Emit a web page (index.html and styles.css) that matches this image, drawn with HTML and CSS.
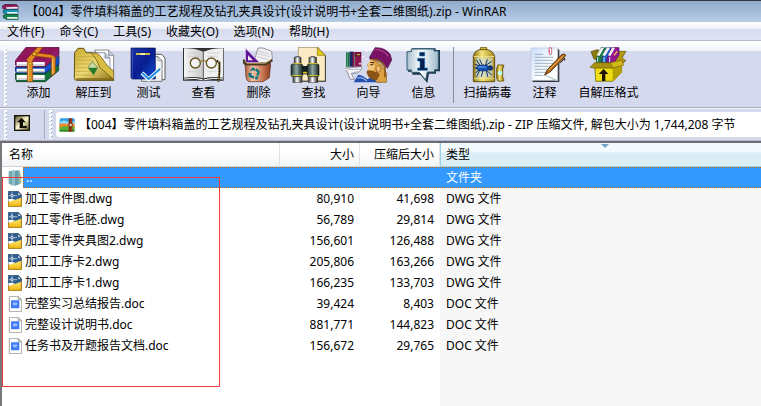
FILE: index.html
```html
<!DOCTYPE html>
<html lang="zh-CN">
<head>
    <meta charset="UTF-8">
    <meta name="viewport" content="width=device-width, initial-scale=1.0">
    <title>WinRAR</title>
    <link rel="stylesheet" href="styles.css">
</head>
<body>
    <!-- shared symbols and gradients -->
    <svg class="defs" aria-hidden="true">
        <defs>
            <linearGradient id="gold" x1="0" x2="1"><stop offset="0" stop-color="#8a7410"/><stop offset=".4" stop-color="#f4e37a"/><stop offset="1" stop-color="#a88a18"/></linearGradient>
            <linearGradient id="folder" x1="0" y1="0" x2="1" y2="1"><stop offset="0" stop-color="#c9a92c"/><stop offset=".5" stop-color="#ecd978"/><stop offset="1" stop-color="#8b7111"/></linearGradient>
            <linearGradient id="bluebook" x1="0" x2="1" y2="1"><stop offset="0" stop-color="#1734a8"/><stop offset=".5" stop-color="#0a1c90"/><stop offset="1" stop-color="#0a4fd0"/></linearGradient>
            <linearGradient id="copper" x1="0" x2="1"><stop offset="0" stop-color="#a55a3c"/><stop offset=".3" stop-color="#f3c4a5"/><stop offset=".7" stop-color="#c87450"/><stop offset="1" stop-color="#8c3d22"/></linearGradient>
            <linearGradient id="tube" x1="0" x2="1"><stop offset="0" stop-color="#1c2c2c"/><stop offset=".45" stop-color="#8fa9a5"/><stop offset="1" stop-color="#152020"/></linearGradient>
            <linearGradient id="silver" x1="0" x2="1"><stop offset="0" stop-color="#333"/><stop offset=".45" stop-color="#fff"/><stop offset="1" stop-color="#222"/></linearGradient>
            <linearGradient id="bubble" x1="0" x2="1"><stop offset="0" stop-color="#a8bfce"/><stop offset=".45" stop-color="#fff"/><stop offset="1" stop-color="#9db9ca"/></linearGradient>
            <linearGradient id="page" x1="0" x2="1"><stop offset="0" stop-color="#f4f4f4"/><stop offset="1" stop-color="#c9c9c9"/></linearGradient>
            <linearGradient id="sheet" x1="0" y1="0" x2="1" y2="1"><stop offset="0" stop-color="#c9dcf8"/><stop offset=".6" stop-color="#fff"/></linearGradient>
            <linearGradient id="upkey" x1="0" y1="0" x2="1" y2="1"><stop offset="0" stop-color="#5b5530"/><stop offset=".5" stop-color="#fffbd0"/><stop offset="1" stop-color="#605a2e"/></linearGradient>
            <linearGradient id="yellow" x1="0" x2="0" y1="0" y2="1"><stop offset="0" stop-color="#ffe873"/><stop offset="1" stop-color="#f0b90f"/></linearGradient>
        </defs>
        <symbol id="dwg" viewBox="0 0 42 48">
            <path d="M1 1H31L41 12V46H1z" fill="#2f5f90" stroke="#24486c" stroke-width="2"/>
            <path d="M30 2V13H40z" fill="#fff" stroke="#24486c" stroke-width="2"/>
            <path d="M12 2V26M3 14H28" stroke="#dce8f4" stroke-width="2"/>
            <path d="M9 11H15V17H9z" fill="#2f5f90" stroke="#fff" stroke-width="2"/>
            <path d="M2 24Q20 26 40 42V46H2z" fill="#fff"/>
            <path d="M2 46V33L40 20V46z" fill="url(#yellow)"/>
            <path d="M2 24H22L2 32z" fill="#fff"/>
            <path d="M2 31V46H40V20" fill="none" stroke="#bd8412" stroke-width="3"/>
        </symbol>
        <symbol id="doc" viewBox="0 0 42 48">
            <path d="M4 1H31L41 11V47H4z" fill="#fff" stroke="#a7a7a7" stroke-width="3"/>
            <path d="M30 1V12H41z" fill="#c9c9c9" stroke="#a7a7a7" stroke-width="2"/>
            <rect x="9" y="13" width="25" height="24" rx="2" fill="#3f7cf4"/>
            <path d="M15 21L18 28L21 24L24 28L27 21z" fill="#8bb3ff" stroke="#b9d0ff" stroke-width="2"/>
        </symbol>
        <symbol id="parent" viewBox="0 0 42 48">
            <path d="M2 4L21 1V46L2 42z" fill="#7caebb"/>
            <path d="M10 3L30 1V45L12 47z" fill="#91c2cc"/>
            <path d="M21 4L35 1V43L21 47z" fill="#6ea3b0"/>
            <path d="M35 3L40 20V38L35 43z" fill="#a6bd86"/>
            <path d="M10 4V45M24 3V45" stroke="#5a91a0" stroke-width="2"/>
        </symbol>
        <symbol id="books" viewBox="45 141 141 108">
            <path d="M46 219L134 219L176 190V212L136 245H50Q42 232 46 219z" fill="#13713c" stroke="#11251b" stroke-width="2"/>
            <path d="M46 201H134L177 167V193L136 219H50Q42 210 46 201z" fill="#1750c8" stroke="#101b48" stroke-width="2"/>
            <path d="M46 182L78 142H177V164L136 200H50Q42 190 46 182z" fill="#951c68" stroke="#3d0930" stroke-width="2"/>
            <path d="M78 143H176L136 179H48z" fill="#8f1658"/>
            <path d="M50 186H134V198H50zM50 206H134V217H50zM50 225H134V240H50z" fill="#fff"/>
            <path d="M53 195H134M53 214H134M53 237H134" stroke="#a7a7b4" stroke-width="3"/>
            <path d="M78 180L113 142H128L98 180V245H82V181M104 158L153 164L166 171V218L154 228V174L97 167z" fill="#e58b22" stroke="#8c4208" stroke-width="2"/>
            <path d="M86 190V243M158 178V222" stroke="#ffc26b" stroke-width="3"/>
            <path d="M103 158L109 162L104 166L98 162zM87 188H93V194H87zM87 209H93V215H87zM87 231H93V237H87z" fill="#e9ef4d" stroke="#66370a"/>
        </symbol>
        <symbol id="stack" viewBox="0 0 51 48">
            <path d="M2 5L12 1H42L48 6V16L12 17L2 13z" fill="#8e1f5c" stroke="#3d0a28" stroke-width="2"/>
            <path d="M12 10L47 8V14L14 15z" fill="#f3e8ee"/>
            <path d="M4 19L14 16H46L48 20V31H14L4 27z" fill="#1796b4" stroke="#0b3c55" stroke-width="2"/>
            <path d="M15 24H47V29H16z" fill="#e9f7fb"/>
            <path d="M4 34L14 31H46L48 35V46H14L4 41z" fill="#14854f" stroke="#083a20" stroke-width="2"/>
            <path d="M15 39H47V44H16z" fill="#eaf6ee"/>
        </symbol>
        <symbol id="zip" viewBox="0 0 48 42">
            <path d="M3 4Q3 1 6 1H44Q47 1 47 5V14H1z" fill="#2b9fe8"/>
            <path d="M1 12Q14 4 24 10T47 9V28H1z" fill="#8ad6f5"/>
            <path d="M1 17H47V29H1z" fill="#f18a2a"/>
            <path d="M1 28Q20 22 47 28V39Q47 41 44 41H4Q1 41 1 38z" fill="#58ae36"/>
            <path d="M2 38H46" stroke="#32832a" stroke-width="4"/>
            <path d="M29 1H40V41H29z" fill="#963716"/>
            <path d="M32 1V41" stroke="#5b1c0d" stroke-width="2"/>
            <path d="M31 16H39V26H31z" fill="#f7e4c4" stroke="#4d1d10" stroke-width="2"/>
        </symbol>
    </svg>

    <div class="window">
        <header class="titlebar">
            <svg class="app-icon"><use href="#stack"/></svg>
            <span>【004】零件填料箱盖的工艺规程及钻孔夹具设计(设计说明书+全套二维图纸).zip - WinRAR</span>
        </header>

        <nav class="menubar">
            <button class="menu">文件(F)</button>
            <button class="menu">命令(C)</button>
            <button class="menu">工具(S)</button>
            <button class="menu">收藏夹(O)</button>
            <button class="menu">选项(N)</button>
            <button class="menu">帮助(H)</button>
        </nav>

        <div class="toolbar">
            <span class="grip"></span>
            <button class="tool">
                <svg class="tool-icon"><use href="#books"/></svg>
                添加
            </button>
            <button class="tool">
                <svg class="tool-icon" viewBox="210 141 141 108">
                    <path d="M284 150H326L341 166V215L300 190z" fill="#fff" stroke="#555" stroke-width="2"/>
                    <path d="M280 158H315L330 174V225H280z" fill="#f2f6fc" stroke="#667" stroke-width="2"/>
                    <path d="M315 158V174H330M326 150V166H341" fill="#bcd" stroke="#667" stroke-width="2"/>
                    <path d="M224 158L234 145H251L258 158H274L293 172L342 241H231Q223 241 223 233z" fill="url(#folder)" stroke="#60500c" stroke-width="3"/>
                    <path d="M227 170H282M227 181H278M227 192H270M227 203H262M227 214H270M227 225H292" stroke="#c4a63a" stroke-width="2"/>
                    <path d="M274 158L288 178L300 203L341 238V213Q330 207 318 192Q304 168 292 160z" fill="#d9bd42" stroke="#604d0e" stroke-width="2"/>
                    <path d="M229 237H335" stroke="#806714" stroke-width="4"/>
                    <path d="M277 184L293 203L281 224L264 203z" fill="#c8dca9" stroke="#536c39" stroke-width="2"/>
                    <path d="M264 203H293L281 224z" fill="#287a28"/>
                </svg>
                解压到
            </button>
            <button class="tool">
                <svg class="tool-icon" viewBox="375 141 141 108">
                    <path d="M464 163H485L495 174V239H460z" fill="#fff" stroke="#555" stroke-width="3"/>
                    <path d="M452 170H474L486 182V244H425V230z" fill="#f2f4f8" stroke="#777" stroke-width="3"/>
                    <path d="M474 170V182H486" fill="none" stroke="#777" stroke-width="2"/>
                    <path d="M393 144H466V237H398Q393 237 393 231z" fill="url(#bluebook)" stroke="#061050" stroke-width="2"/>
                    <path d="M397 146V235" stroke="#4b70d0" stroke-width="2"/>
                    <path d="M408 162H450" stroke="#eddc42" stroke-width="5"/>
                    <path d="M422 160H435V165H422z" fill="#fff8ac"/>
                    <path d="M426 219L446 238L483 205" fill="none" stroke="#fff" stroke-width="12"/>
                    <path d="M427 220L446 237L481 206" fill="none" stroke="#188de1" stroke-width="6"/>
                </svg>
                测试
            </button>
            <button class="tool">
                <svg class="tool-icon" viewBox="540 141 141 108">
                    <path d="M549 144H671V242H549z" fill="#303034"/>
                    <path d="M552 145Q584 144 610 155V235Q584 228 552 233z" fill="url(#page)"/>
                    <path d="M669 145Q638 144 611 155V235Q638 228 669 233z" fill="#efefef"/>
                    <path d="M552 237Q586 232 608 239M613 239Q640 232 669 237" fill="none" stroke="#fff" stroke-width="3"/>
                    <path d="M610 152V238" stroke="#666" stroke-width="3"/>
                    <path d="M562 159H598M562 169H598M562 215H598M622 159H659M622 169H654M622 215H649" stroke="#c6c6c6" stroke-width="2"/>
                    <circle cx="586" cy="189" r="15" fill="#fff" fill-opacity=".6" stroke="#65531c" stroke-width="4"/>
                    <circle cx="634" cy="189" r="15" fill="#fff" fill-opacity=".6" stroke="#65531c" stroke-width="4"/>
                    <path d="M601 186Q610 176 619 186" fill="none" stroke="#9d7d23" stroke-width="4"/>
                    <path d="M650 182L658 188V216L655 245" fill="none" stroke="#211b09" stroke-width="6"/>
                    <path d="M656 184V242" stroke="#d1b34a" stroke-width="3" stroke-dasharray="5 3"/>
                </svg>
                查看
            </button>
            <button class="tool">
                <svg class="tool-icon" viewBox="0 15 141 108">
                    <path d="M58 57L69 18H84L110 28L112 51L106 62H58z" fill="#f1f1f3" stroke="#65656d" stroke-width="2"/>
                    <path d="M69 27L103 36M69 35L103 44M67 44L99 53" stroke="#b4b4bc" stroke-width="2"/>
                    <path d="M31 18L75 62H31z" fill="#5f1396" stroke="#fff" stroke-width="2"/>
                    <path d="M39 40L54 55H39z" fill="#f1eaf7"/>
                    <path d="M30 64H107L103 107L84 119H41Q34 115 33 106z" fill="url(#copper)" stroke="#5f2919" stroke-width="2"/>
                    <path d="M28 53Q24 66 37 67H92L112 54" fill="none" stroke="#4a3823" stroke-width="7"/>
                    <path d="M30 57L36 64H91L108 53" fill="none" stroke="#d8b96b" stroke-width="2"/>
                    <path d="M46 85L54 75L62 83L57 87L53 83L50 88zM65 79L75 89L70 101L63 99L68 91L61 86zM40 93L51 93L48 99L58 103L56 110L42 104zM61 104L70 102L67 113L60 111z" fill="#087887"/>
                </svg>
                删除
            </button>
            <button class="tool">
                <svg class="tool-icon" viewBox="165 15 141 108">
                    <path d="M190 16H249L273 41V119H196z" fill="#242424"/>
                    <path d="M190 16H247L270 40V116H190z" fill="#fbebc4" stroke="#aa9872" stroke-width="2"/>
                    <path d="M247 16V40H270z" fill="#e5ca16" stroke="#85730d" stroke-width="2"/>
                    <path d="M178 46H198V68H178zM222 46H244V68H222zM174 103H201V121H174zM220 103H248V121H220z" fill="url(#silver)" stroke="#222" stroke-width="2"/>
                    <path d="M178 46H198V68H178z" fill="url(#silver)"/>
                    <path d="M222 46H244V68H222z" fill="url(#silver)"/>
                    <path d="M174 103H201V121H174z" fill="url(#silver)"/>
                    <path d="M220 103H248V121H220z" fill="url(#silver)"/>
                    <rect x="199" y="72" width="23" height="25" fill="#152020"/>
                    <path d="M200 92H221" stroke="#e3cc20" stroke-width="5"/>
                    <rect x="168" y="66" width="35" height="38" rx="5" fill="url(#tube)" stroke="#111b1b" stroke-width="2"/>
                    <rect x="217" y="66" width="35" height="38" rx="5" fill="url(#tube)" stroke="#111b1b" stroke-width="2"/>
                    <path d="M175 65H200M221 65H247M170 101H201M219 101H250" stroke="#dbc423" stroke-width="3"/>
                    <path d="M181 44H194M227 44H240" stroke="#555" stroke-width="3"/>
                </svg>
                查找
            </button>
            <button class="tool">
                <svg class="tool-icon" viewBox="15 15 141 108">
                    <path d="M18 31H29V74H18z" fill="#197247"/>
                    <path d="M29 29H40V74H29z" fill="#1a2860"/>
                    <path d="M38 30H64V74H38z" fill="#8b174f"/>
                    <path d="M22 32V72M44 32V72" stroke="#7dba9c" stroke-width="2"/>
                    <path d="M44 34H63V43H44z" fill="#571024"/>
                    <path d="M50 38H60" stroke="#f0d052" stroke-width="3"/>
                    <path d="M18 78L65 74L65 82L53 93L34 94L43 112H31L22 89L11 83z" fill="#f3f3f7" stroke="#666b75" stroke-width="2"/>
                    <path d="M34 95L54 88M20 82H62" stroke="#969ca8" stroke-width="2"/>
                    <path d="M41 121L55 98Q67 99 82 112L109 98L125 121z" fill="#244fa9"/>
                    <path d="M52 108Q68 104 80 117" stroke="#89adf0" stroke-width="4" fill="none"/>
                    <path d="M92 48L126 70L140 95L139 121H111L90 97L80 91L89 78L82 69L91 61z" fill="#dda042" stroke="#87541a" stroke-width="2"/>
                    <path d="M92 54L101 58L95 63L106 72L99 86L82 83Q87 71 82 67z" fill="#f1c57c"/>
                    <path d="M81 87Q97 83 106 91L112 86L119 99L111 114Q87 114 81 95z" fill="#8a5516"/>
                    <path d="M91 61L102 62M91 68H99" stroke="#3b200c" stroke-width="3"/>
                    <path d="M107 77Q117 65 123 78Q122 91 113 92z" fill="#f0bd70" stroke="#945b20" stroke-width="2"/>
                    <path d="M89 45L105 17Q137 16 151 38L155 54L142 79Q126 55 89 49z" fill="#791164" stroke="#46083f" stroke-width="2"/>
                    <path d="M103 22Q132 22 145 43" stroke="#a83b85" stroke-width="4" fill="none"/>
                    <path d="M101 52Q124 54 135 74V106" stroke="#8a5a1c" stroke-width="5" fill="none"/>
                    <path d="M60 17V23M57 20H63M80 24V30M77 27H83M69 42V48M66 45H72M60 61V69M56 65H64M79 50V54" stroke="#fff" stroke-width="2"/>
                </svg>
                向导
            </button>
            <button class="tool">
                <svg class="tool-icon" viewBox="180 15 141 108">
                    <path d="M216 24V19H287V24H300V88H288V95H267L262 123L241 98H217V89H204V29H216z" fill="#1a3847"/>
                    <path d="M214 21H282V27H295V83H284V90H262L257 114L238 91H214V84H201V29H214z" fill="url(#bubble)" stroke="#315c75" stroke-width="3"/>
                    <path d="M239 31H254V42H239zM233 49H254V78H262V85H233V78H240V57H233z" fill="#071f48" stroke="#1674ba" stroke-width="2"/>
                </svg>
                信息
            </button>
            <span class="divider"></span>
            <button class="tool tool-scan">
                <svg class="tool-icon" viewBox="642 141 141 108">
                    <path d="M691 151V143H710V151" fill="#e6cb38" stroke="#786514" stroke-width="3"/>
                    <path d="M670 170Q672 151 691 149H711Q730 152 734 170V245H670z" fill="url(#gold)" stroke="#635214" stroke-width="3"/>
                    <path d="M672 170H732M672 236H732" stroke="#efe59a" stroke-width="3"/>
                    <path d="M677 174H728V232H677z" fill="#cfe2e9" fill-opacity=".6"/>
                    <path d="M679 179L691 198L675 193M689 178L698 197M712 178L706 197L725 184M676 219L691 207L680 230M694 230L699 211M726 226L709 210L713 230M674 204H730" stroke="#092d75" stroke-width="3" fill="none"/>
                    <ellipse cx="699" cy="204" rx="20" ry="9" fill="#1550b7" stroke="#071e58" stroke-width="2"/>
                    <circle cx="721" cy="204" r="8" fill="#173776"/>
                    <path d="M684 201H708" stroke="#78b7ff" stroke-width="3"/>
                    <path d="M743 195H761V203H758V235H761V243H743V236H740V203H743z" fill="url(#gold)" stroke="#75600d" stroke-width="3"/>
                    <circle cx="750" cy="219" r="7" fill="#b9ffff"/>
                </svg>
                扫描病毒
            </button>
            <button class="tool tool-comment">
                <svg class="tool-icon" viewBox="63 141 141 108">
                    <path d="M98 148H178V246H98z" fill="#343434"/>
                    <path d="M93 144H173V241H93z" fill="url(#sheet)" stroke="#b8c7db" stroke-width="2"/>
                    <path d="M104 163H130M104 172H160M104 181H160M104 190H160M104 199H156M104 208H149M104 217H140M104 226H130" stroke="#718fac" stroke-width="2"/>
                    <path d="M147 157V148Q147 142 151 142T155 148V159Q155 164 151 164T148 159V150" stroke="#cf2741" stroke-width="2" fill="none"/>
                    <path d="M135 225L173 243" stroke="#adc1cc" stroke-width="4"/>
                    <path d="M134 225L142 209L183 166Q190 159 196 164Q198 167 193 171L151 215z" fill="#b86b18" stroke="#542d0c" stroke-width="3"/>
                    <path d="M146 210L190 168" stroke="#f1b45a" stroke-width="3"/>
                    <path d="M181 189L194 174V182" fill="none" stroke="#36210d" stroke-width="3"/>
                </svg>
                注释
            </button>
            <button class="tool tool-sfx">
                <svg class="tool-icon" viewBox="255 141 141 108">
                    <path d="M273 155L291 149L339 171L364 190L345 194L282 177z" fill="#8b7b0a" stroke="#4e460a" stroke-width="2"/>
                    <path d="M350 154H378L366 174L378 182L348 201L338 180z" fill="#b39a10" stroke="#5d500a" stroke-width="2"/>
                    <path d="M290 173L303 143L318 144L307 188H289z" fill="#1d7842" stroke="#174125" stroke-width="2"/>
                    <path d="M307 174L319 142L336 144L321 188H305z" fill="#1f5fc0" stroke="#143571" stroke-width="2"/>
                    <path d="M322 174L335 142L357 143V165L342 188H320z" fill="#941894" stroke="#500a57" stroke-width="2"/>
                    <path d="M290 166L303 143L312 144L298 168zM307 166L321 142L330 144L315 168zM324 166L337 142L345 144L331 168z" fill="#f2f2f2"/>
                    <path d="M293 171V186M312 171V186M329 171V186" stroke="#b8eaff" stroke-width="3"/>
                    <path d="M342 166L352 154" stroke="#efc444" stroke-width="4"/>
                    <path d="M284 193H338L365 182V216L339 244H287z" fill="#e1cf09" stroke="#665b05" stroke-width="2"/>
                    <path d="M338 194L365 183V216L339 243z" fill="#b5a006"/>
                    <path d="M270 202L284 188H332L339 204H281z" fill="#a8910d" stroke="#685a08" stroke-width="2"/>
                    <path d="M338 204L331 188L365 181L372 195z" fill="#d3b914" stroke="#776908" stroke-width="2"/>
                    <path d="M288 208H335V240H288z" fill="#f0df18"/>
                    <path d="M296 222L311 207L325 222H316V243H306V222z" fill="#211500"/>
                </svg>
                自解压格式
            </button>
        </div>

        <div class="addressbar">
            <span class="grip"></span>
            <button class="up" aria-label="上一级">
                <svg class="up-icon" viewBox="0 0 48 48">
                    <rect width="48" height="48" fill="#16150c"/>
                    <rect x="4" y="4" width="40" height="40" fill="url(#upkey)"/>
                    <path d="M22 8L36 22H27V33H38V39H17V22H9z" fill="#100e04"/>
                </svg>
            </button>
            <span class="grip"></span>
            <label class="address">
                <svg class="zip-icon"><use href="#zip"/></svg>
                <input class="address-input" type="text" aria-label="地址" readonly value="【004】零件填料箱盖的工艺规程及钻孔夹具设计(设计说明书+全套二维图纸).zip - ZIP 压缩文件, 解包大小为 1,744,208 字节">
            </label>
        </div>

        <main class="list">
            <table class="files">
                <colgroup>
                    <col class="col-name">
                    <col class="col-size">
                    <col class="col-packed">
                    <col>
                </colgroup>
                <thead>
                    <tr>
                        <th>名称</th>
                        <th class="num">大小</th>
                        <th class="num">压缩后大小</th>
                        <th class="sorted">类型</th>
                    </tr>
                </thead>
                <tbody>
                    <tr class="selected">
                        <td><div class="file"><svg class="file-icon"><use href="#parent"/></svg><span class="file-name">..</span></div></td>
                        <td></td>
                        <td></td>
                        <td>文件夹</td>
                    </tr>
                    <tr>
                        <td><div class="file"><svg class="file-icon"><use href="#dwg"/></svg><span class="file-name">加工零件图.dwg</span></div></td>
                        <td class="num">80,910</td>
                        <td class="num">41,698</td>
                        <td>DWG 文件</td>
                    </tr>
                    <tr>
                        <td><div class="file"><svg class="file-icon"><use href="#dwg"/></svg><span class="file-name">加工零件毛胚.dwg</span></div></td>
                        <td class="num">56,789</td>
                        <td class="num">29,814</td>
                        <td>DWG 文件</td>
                    </tr>
                    <tr>
                        <td><div class="file"><svg class="file-icon"><use href="#dwg"/></svg><span class="file-name">加工零件夹具图2.dwg</span></div></td>
                        <td class="num">156,601</td>
                        <td class="num">126,488</td>
                        <td>DWG 文件</td>
                    </tr>
                    <tr>
                        <td><div class="file"><svg class="file-icon"><use href="#dwg"/></svg><span class="file-name">加工工序卡2.dwg</span></div></td>
                        <td class="num">205,806</td>
                        <td class="num">163,266</td>
                        <td>DWG 文件</td>
                    </tr>
                    <tr>
                        <td><div class="file"><svg class="file-icon"><use href="#dwg"/></svg><span class="file-name">加工工序卡1.dwg</span></div></td>
                        <td class="num">166,235</td>
                        <td class="num">133,703</td>
                        <td>DWG 文件</td>
                    </tr>
                    <tr>
                        <td><div class="file"><svg class="file-icon"><use href="#doc"/></svg><span class="file-name">完整实习总结报告.doc</span></div></td>
                        <td class="num">39,424</td>
                        <td class="num">8,403</td>
                        <td>DOC 文件</td>
                    </tr>
                    <tr>
                        <td><div class="file"><svg class="file-icon"><use href="#doc"/></svg><span class="file-name">完整设计说明书.doc</span></div></td>
                        <td class="num">881,771</td>
                        <td class="num">144,823</td>
                        <td>DOC 文件</td>
                    </tr>
                    <tr>
                        <td><div class="file"><svg class="file-icon"><use href="#doc"/></svg><span class="file-name">任务书及开题报告文档.doc</span></div></td>
                        <td class="num">156,672</td>
                        <td class="num">29,765</td>
                        <td>DOC 文件</td>
                    </tr>
                </tbody>
            </table>
            <div class="marker"></div>
        </main>
    </div>
</body>
</html>
```

FILE: styles.css
```css
* {
    box-sizing: border-box;
}
body {
    margin: 0;
    font-family: "Noto Sans", "Noto Sans CJK SC", sans-serif;
    font-size: 12px;
    line-height: 18px;
    color: #000;
    background: #d5d9ed;
}
button,
input {
    font: inherit;
    color: inherit;
    border: none;
    background: none;
    padding: 0;
    margin: 0;
}
svg {
    display: block;
    flex: none;
}
.defs {
    position: absolute;
    width: 0;
    height: 0;
}
.window {
    display: flex;
    flex-direction: column;
    min-height: 100vh;
}

/* title and menu */
.titlebar {
    display: flex;
    align-items: center;
    gap: 7px;
    height: 22px;
    padding-left: 2px;
    border-top: 1px solid #33363d;
    background: linear-gradient(#91abcd, #b6cde6);
    white-space: nowrap;
    overflow: hidden;
}
.app-icon {
    width: 17px;
    height: 16px;
}
.menubar {
    display: flex;
    gap: 15px;
    height: 19px;
    padding: 1px 0 0 7px;
    border-bottom: 1px solid #b2b7c9;
    background: linear-gradient(#fff 0, #eef0f8 7px, #d5dbed 7px, #e0e3f4);
}
.menu {
    white-space: nowrap;
}

/* toolbar */
.toolbar {
    display: flex;
    height: 67px;
    padding-top: 6px;
    border-bottom: 1px solid #a9adbb;
    background: linear-gradient(#fff 0, #f0f2f9 10px, #d5d9ed 10px);
}
.grip {
    flex: none;
    width: 3px;
    margin: 0 4px;
    background:
        linear-gradient(#9a9fb4, #9a9fb4) 1px 1px / 2px 2px no-repeat,
        linear-gradient(#fff, #fff) 0 0 / 2px 2px no-repeat;
    background:
        conic-gradient(#fff 25%, #9a9fb4 0 50%, #fff 0) 0 0 / 3px 4px;
    mask: linear-gradient(#000 3px, transparent 3px) 0 0 / 3px 4px;
}
.tool {
    display: flex;
    flex-direction: column;
    align-items: center;
    gap: 1px;
    flex: none;
    width: 55px;
    white-space: nowrap;
}
.tool-icon {
    width: 47px;
    height: 36px;
}
.divider {
    width: 1px;
    height: 56px;
    margin: 0 3px 0 2px;
    background: #85899a;
}
.tool-scan {
    width: 61px;
}
.tool-comment {
    width: 53px;
}
.tool-sfx {
    width: 75px;
}

/* address bar */
.addressbar {
    display: flex;
    height: 33px;
    padding: 1px 0;
    border-top: 1px solid #f4f6fc;
    border-bottom: 1px solid #b5b8c6;
}
.up {
    flex: none;
    width: 34px;
    padding: 0 0 3px 3px;
    border-right: 1px solid #a9adbb;
}
.up-icon {
    width: 16px;
    height: 16px;
}
.address {
    display: flex;
    align-items: center;
    flex: 1;
    gap: 4px;
    min-width: 0;
    padding-left: 3px;
    margin: 2px 0 2px;
    border-radius: 3px 0 0 3px;
    background: #fff;
}
.zip-icon {
    width: 16px;
    height: 14px;
}
.address-input {
    flex: 1;
    min-width: 0;
    outline: none;
}

/* file list, the type column is tinted to the bottom */
.list {
    position: relative;
    flex: 1;
    border-top: 2px solid #6a6b75;
    border-left: 2px solid #77777d;
    background: linear-gradient(#f7f7f7, #f7f7f7) 438px 0 no-repeat #fff;
}
.files {
    width: 100%;
    table-layout: fixed;
    border-collapse: separate;
    border-spacing: 0;
}
.col-name {
    width: 278px;
}
.col-size {
    width: 80px;
}
.col-packed {
    width: 80px;
}
th {
    position: relative;
    height: 24px;
    padding: 0 5px 0 7px;
    font-weight: normal;
    text-align: left;
    border-right: 1px solid #dfe1e5;
    border-bottom: 1px solid #d5d5d5;
    background: linear-gradient(#fff 40%, #f3f4f6);
}
th.sorted {
    padding-left: 5px;
    border-right: none;
    border-left: 1px solid #95d0e8;
    border-bottom-color: #9fd3e6;
    background: linear-gradient(#f3fafd 40%, #d9eef6 42%, #dceff7);
}
th.sorted::after {
    content: "";
    position: absolute;
    top: 1px;
    left: 50%;
    border: 4px solid transparent;
    border-top-color: #6fa6c4;
    border-bottom: none;
}
td {
    height: 21px;
    padding: 0 6px;
    white-space: nowrap;
}
th.num,
td.num {
    text-align: right;
}
td:first-child {
    padding: 0;
}
.file {
    display: flex;
    align-items: center;
    height: 21px;
    padding-left: 6px;
}
.file-icon {
    width: 14px;
    height: 16px;
}
.file-name {
    flex: 1;
    margin-left: 1px;
    padding-left: 2px;
}

/* dotted focus line along the top and bottom of the selected row */
.selected td,
.selected .file-name {
    color: #fff;
    background:
        repeating-linear-gradient(90deg, #c56a1a 0 1px, #3399ff 1px 2px) top / 100% 1px no-repeat,
        repeating-linear-gradient(90deg, #c56a1a 0 1px, #3399ff 1px 2px) bottom / 100% 1px no-repeat,
        #3399ff;
}
.selected td:first-child {
    background: none;
}
.selected .file-name {
    height: 21px;
    line-height: 21px;
    border-left: 1px dotted #c56a1a;
}

/* red annotation frame drawn over the list */
.marker {
    position: absolute;
    top: 34px;
    left: 0;
    width: 218px;
    height: 210px;
    border: 1px solid #f33b3b;
}
```
